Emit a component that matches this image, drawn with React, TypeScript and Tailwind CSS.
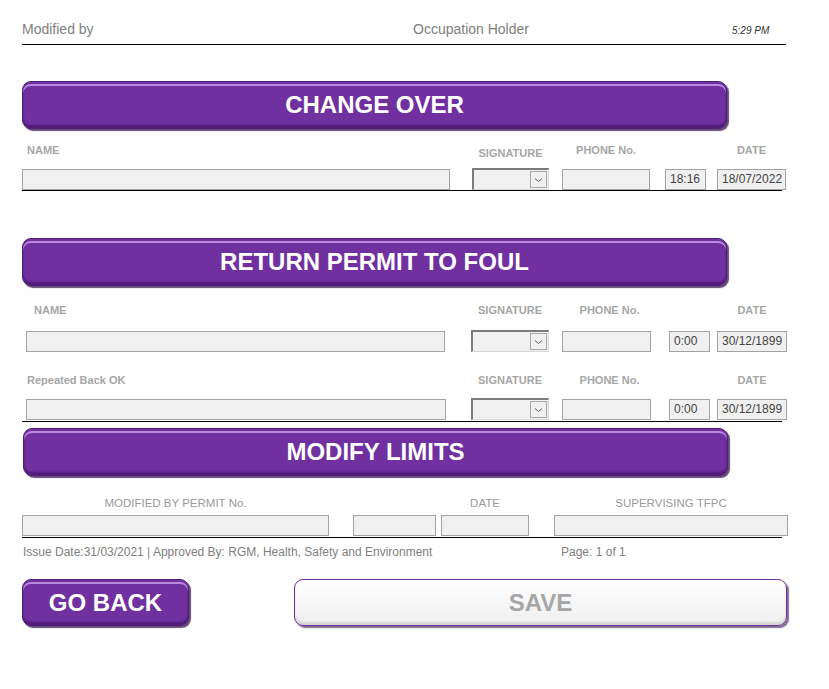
import React from "react";

const bar =
  "flex items-center justify-center shrink-0 rounded-[9px] bg-[#7030a0] border border-[#4e1d75] shadow-[inset_0_2px_0_#7030a0,inset_0_4px_0_#b98ae0,inset_0_-3px_2px_#4f1c78,2px_2px_1px_rgba(50,15,75,0.75)] text-white font-bold";

const box = "shrink-0 h-[21px] bg-[#f0f0f0] border border-[#a3a3a3] text-[12px] text-[#444] leading-[19px] px-[4px] overflow-hidden whitespace-nowrap";

const lbl = "shrink-0 text-[11px] font-bold text-[#a6a6a6] leading-[13px] whitespace-nowrap";

function Sel({ cls }: { cls: string }) {
  return (
    <div className={`${cls} shrink-0 h-[22px] flex bg-[#f0f0f0] border-t-2 border-l-2 border-[#7b7b7b] border-r border-b border-r-[#d8d8d8] border-b-[#d8d8d8]`}>
      <div className="flex-1" />
      <div className="w-[17px] h-[17px] mt-[1px] mr-[1px] border border-[#a8a8a8] bg-[#f0f0f0] flex items-center justify-center">
        <svg width="9" height="6" viewBox="0 0 9 6">
          <path d="M1 1.5 L4.5 4.5 L8 1.5" fill="none" stroke="#606060" strokeWidth="1" />
        </svg>
      </div>
    </div>
  );
}

export default function App() {
  return (
    <div className="w-[829px] h-[689px] bg-white font-['Liberation_Sans',Arial,sans-serif] overflow-hidden">
      {/* Header */}
      <div className="ml-[22px] w-[764px] pt-[21px] pb-[6px] border-b border-black flex items-baseline">
        <span className="w-[391px] shrink-0 text-[14px] leading-[16px] text-[#808080]">Modified by</span>
        <span className="w-[319px] shrink-0 text-[14px] leading-[16px] text-[#808080]">Occupation Holder</span>
        <span className="text-[10px] italic text-[#333]">5:29 PM</span>
      </div>

      {/* CHANGE OVER */}
      <div className={`${bar} ml-[22px] mt-[36px] w-[705px] h-[48px] text-[24px]`}>CHANGE OVER</div>

      <div className="ml-[22px] mt-[15px] flex h-[13px]">
        <div className={`${lbl} w-[428px] pl-[5px]`}>NAME</div>
        <div className={`${lbl} ml-[22px] w-[77px] text-center mt-[3px]`}>SIGNATURE</div>
        <div className={`${lbl} ml-[13px] w-[88px] text-center`}>PHONE No.</div>
        <div className="shrink-0 ml-[15px] w-[41px]" />
        <div className={`${lbl} ml-[11px] w-[69px] text-center`}>DATE</div>
      </div>
      <div className="ml-[22px] mt-[11px] w-[760px] h-[23px] border-b border-black flex items-start">
        <div className={`${box} w-[428px] mt-[1px]`} />
        <Sel cls="ml-[22px] w-[77px]" />
        <div className={`${box} ml-[13px] w-[88px] mt-[1px]`} />
        <div className={`${box} ml-[15px] w-[41px] mt-[1px]`}>18:16</div>
        <div className={`${box} ml-[11px] w-[69px] mt-[1px]`}>18/07/2022</div>
      </div>

      {/* RETURN PERMIT TO FOUL */}
      <div className={`${bar} ml-[22px] mt-[47px] w-[705px] h-[48px] text-[24px]`}>RETURN PERMIT TO FOUL</div>

      <div className="ml-[22px] mt-[18px] flex h-[13px]">
        <div className={`${lbl} w-[423px] pl-[12px]`}>NAME</div>
        <div className={`${lbl} ml-[26px] w-[78px] text-center`}>SIGNATURE</div>
        <div className={`${lbl} ml-[13px] w-[95px] text-center`}>PHONE No.</div>
        <div className="shrink-0 ml-[12px] w-[41px]" />
        <div className={`${lbl} ml-[7px] w-[70px] text-center`}>DATE</div>
      </div>
      <div className="ml-[22px] mt-[14px] flex h-[21px] items-start">
        <div className={`${box} ml-[4px] w-[419px]`} />
        <Sel cls="ml-[26px] w-[78px] -mt-[1px]" />
        <div className={`${box} ml-[13px] w-[89px]`} />
        <div className={`${box} ml-[18px] w-[41px]`}>0:00</div>
        <div className={`${box} ml-[7px] w-[70px]`}>30/12/1899</div>
      </div>

      <div className="ml-[22px] mt-[22px] flex h-[13px]">
        <div className={`${lbl} w-[423px] pl-[5px]`}>Repeated Back OK</div>
        <div className={`${lbl} ml-[26px] w-[78px] text-center`}>SIGNATURE</div>
        <div className={`${lbl} ml-[13px] w-[95px] text-center`}>PHONE No.</div>
        <div className="shrink-0 ml-[12px] w-[41px]" />
        <div className={`${lbl} ml-[7px] w-[70px] text-center`}>DATE</div>
      </div>
      <div className="ml-[22px] mt-[12px] w-[760px] h-[23px] border-b border-black flex items-start">
        <div className={`${box} ml-[4px] w-[420px]`} />
        <Sel cls="ml-[25px] w-[78px] -mt-[1px]" />
        <div className={`${box} ml-[13px] w-[89px]`} />
        <div className={`${box} ml-[18px] w-[41px]`}>0:00</div>
        <div className={`${box} ml-[7px] w-[70px]`}>30/12/1899</div>
      </div>

      {/* MODIFY LIMITS */}
      <div className={`${bar} ml-[23px] mt-[6px] w-[705px] h-[48px] text-[24px]`}>MODIFY LIMITS</div>

      <div className="ml-[22px] mt-[20px] flex h-[14px] text-[11.5px] leading-[14px] text-[#9a9a9a]">
        <div className="shrink-0 w-[307px] text-center">MODIFIED BY PERMIT No.</div>
        <div className="shrink-0 ml-[24px] w-[83px]" />
        <div className="shrink-0 ml-[5px] w-[88px] text-center">DATE</div>
        <div className="shrink-0 ml-[25px] w-[234px] text-center">SUPERVISING TFPC</div>
      </div>
      <div className="ml-[22px] mt-[5px] w-[760px] h-[23px] border-b border-black flex items-start">
        <div className={`${box} w-[307px]`} />
        <div className={`${box} ml-[24px] w-[83px]`} />
        <div className={`${box} ml-[5px] w-[88px]`} />
        <div className={`${box} ml-[25px] w-[234px]`} />
      </div>

      <div className="ml-[23px] mt-[7px] flex text-[12px] leading-[14px] text-[#808080]">
        <span className="shrink-0 w-[538px]">Issue Date:31/03/2021 | Approved By: RGM, Health, Safety and Environment</span>
        <span>Page: 1 of 1</span>
      </div>

      {/* Buttons */}
      <div className="ml-[22px] mt-[20px] flex">
        <div className={`${bar} w-[167px] h-[47px] text-[24px]`}>GO BACK</div>
        <div className="shrink-0 ml-[105px] w-[493px] h-[47px] flex items-center justify-center rounded-[9px] border-[1.5px] border-[#7030a0] bg-gradient-to-b from-[#ffffff] to-[#efefef] shadow-[inset_0_-3px_2px_#d4d4d4,2px_2px_1px_rgba(50,15,75,0.6)] text-[24px] font-bold text-[#a6a6a6]">
          SAVE
        </div>
      </div>
    </div>
  );
}
